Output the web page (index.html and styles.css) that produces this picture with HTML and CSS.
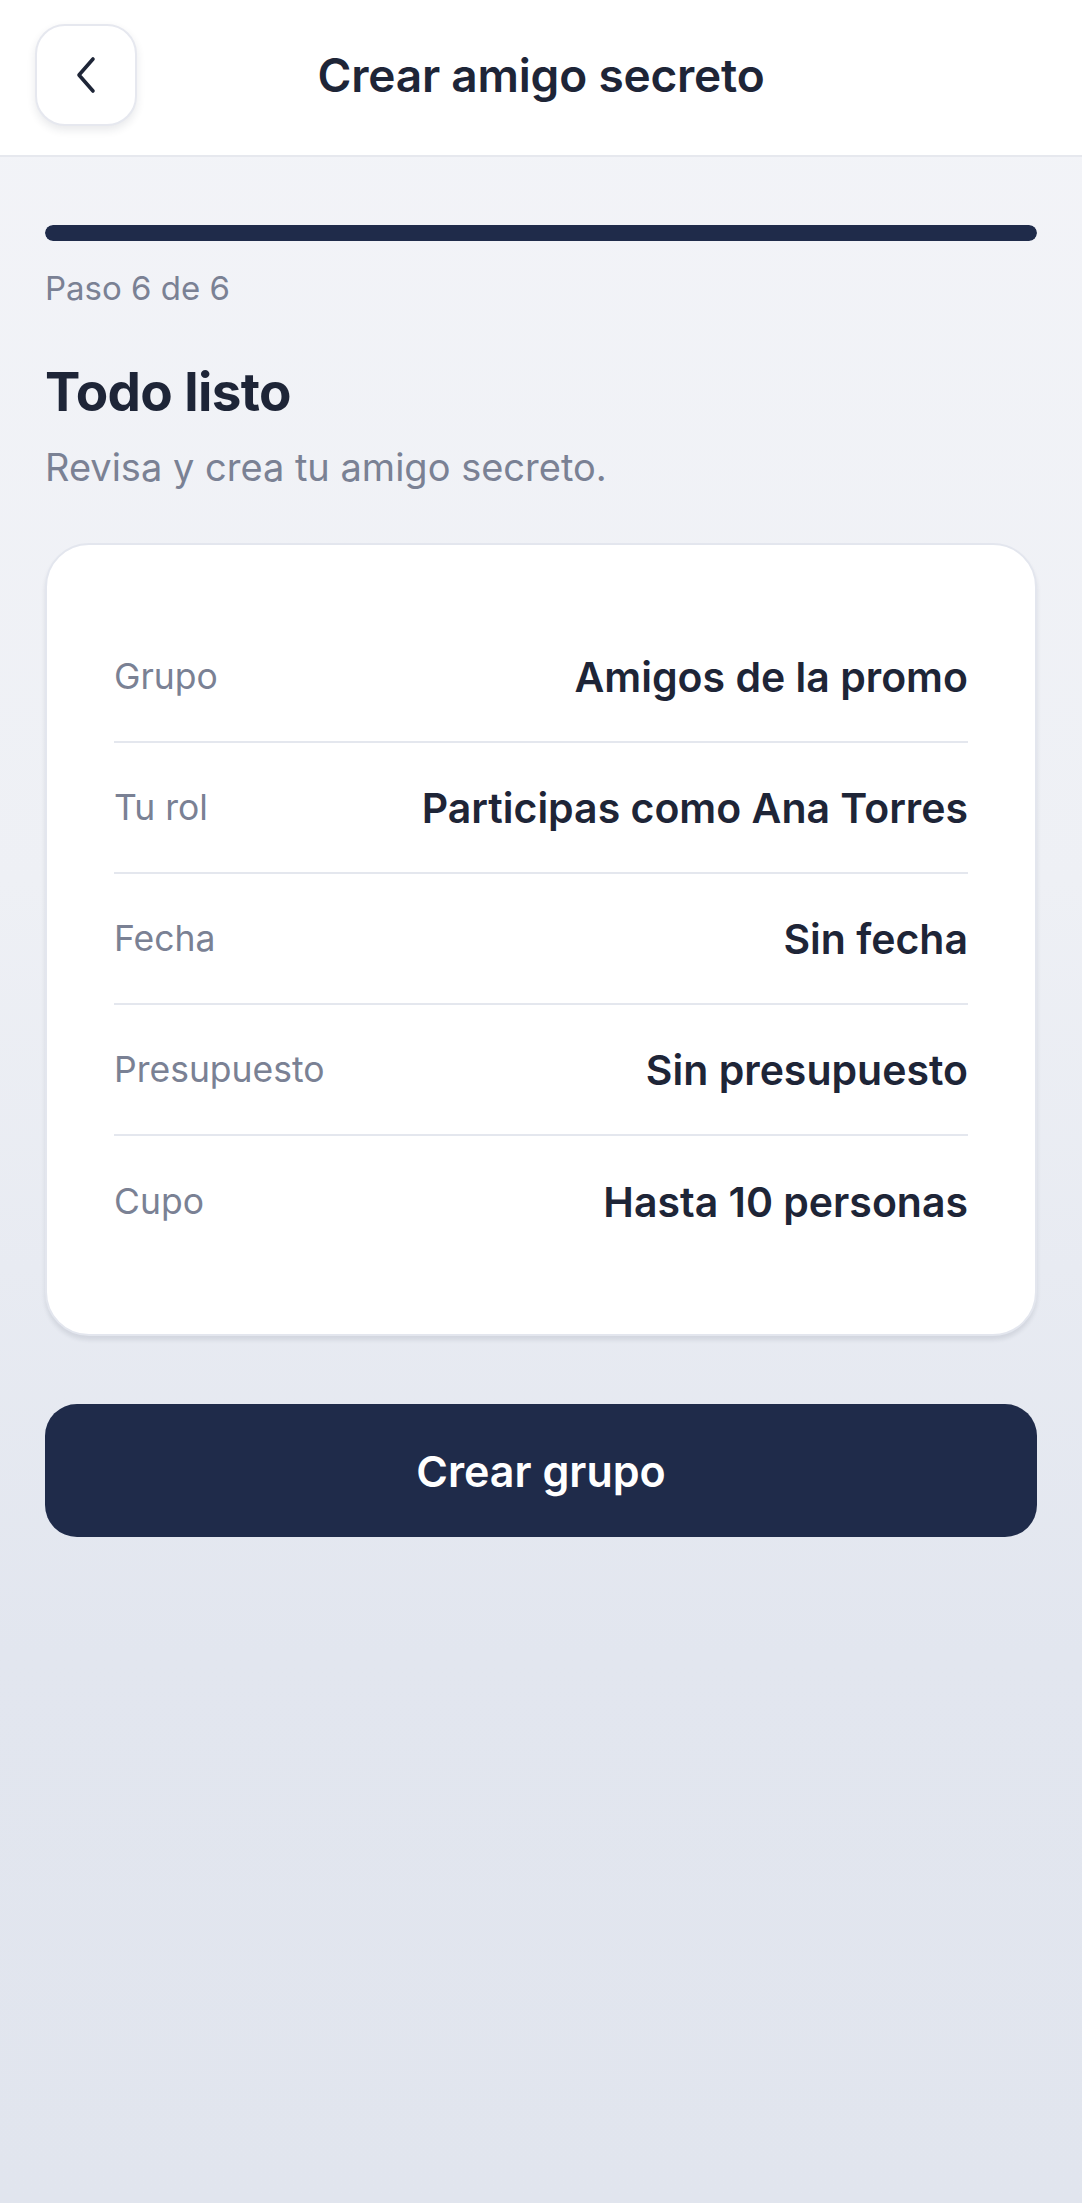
FILE: index.html
```html
<!DOCTYPE html>
<html lang="es">
<head>
    <meta charset="UTF-8">
    <meta name="viewport" content="width=device-width, initial-scale=1.0">
    <title>Crear amigo secreto</title>
    <link rel="stylesheet" href="styles.css">
</head>
<body>
    <header class="topbar">
        <button class="back-btn" type="button" aria-label="Volver">
            <svg width="24" height="38" viewBox="0 0 24 38">
                <path d="M19 3 L5 19 L19 35" fill="none" stroke="#1e2537" stroke-width="3.6" stroke-linecap="round" stroke-linejoin="round"/>
            </svg>
        </button>
        <h1 class="topbar-title">Crear amigo secreto</h1>
        <span class="spacer"></span>
    </header>

    <main class="content">
        <div class="progress"><div class="progress-fill"></div></div>
        <p class="step">Paso 6 de 6</p>

        <h2 class="heading">Todo listo</h2>
        <p class="subheading">Revisa y crea tu amigo secreto.</p>

        <section class="summary">
            <div class="row">
                <span class="label">Grupo</span>
                <span class="value">Amigos de la promo</span>
            </div>
            <div class="row">
                <span class="label">Tu rol</span>
                <span class="value">Participas como Ana Torres</span>
            </div>
            <div class="row">
                <span class="label">Fecha</span>
                <span class="value">Sin fecha</span>
            </div>
            <div class="row">
                <span class="label">Presupuesto</span>
                <span class="value">Sin presupuesto</span>
            </div>
            <div class="row">
                <span class="label">Cupo</span>
                <span class="value">Hasta 10 personas</span>
            </div>
        </section>

        <button class="btn" type="button">Crear grupo</button>
    </main>
</body>
</html>
```

FILE: styles.css
```css
* {
    box-sizing: border-box;
}
body {
    margin: 0;
    min-height: 2203px;
    font-family: Inter, "Noto Sans", sans-serif;
    color: #1e2537;
    background: linear-gradient(180deg, #f3f4f8 0%, #eef0f5 40%, #e2e6ef 75%, #e1e5ee 100%);
}
.topbar {
    height: 157px;
    background: #ffffff;
    border-bottom: 2px solid #e6e8ee;
    display: grid;
    grid-template-columns: 102px 1fr 102px;
    align-items: center;
    padding: 0 35px 6px;
}
.back-btn {
    width: 102px;
    height: 102px;
    border-radius: 30px;
    background: #ffffff;
    border: 2px solid #e6e8ef;
    box-shadow: 0 4px 8px rgba(30, 37, 55, 0.1);
    display: flex;
    align-items: center;
    justify-content: center;
    padding: 0;
    cursor: pointer;
}
.topbar-title {
    margin: 0;
    text-align: center;
    font-size: 46px;
    font-weight: 600;
    letter-spacing: -0.2px;
}
.content {
    padding: 68px 45px 0;
}
.progress {
    height: 16px;
    border-radius: 8px;
    background: #dfe3eb;
    overflow: hidden;
}
.progress-fill {
    width: 100%;
    height: 100%;
    background: #1f2b4a;
    border-radius: 8px;
}
.step {
    margin: 27px 0 0;
    font-size: 33px;
    color: #7a8194;
}
.heading {
    margin: 52px 0 0;
    font-size: 53px;
    font-weight: 700;
    letter-spacing: -0.6px;
}
.subheading {
    margin: 20px 0 0;
    font-size: 38px;
    color: #7a8194;
}
.summary {
    margin-top: 53px;
    background: #ffffff;
    border: 2px solid #e3e6ee;
    border-radius: 44px;
    box-shadow: 0 4px 4px rgba(30, 37, 55, 0.1);
    padding: 67px 67px;
}
.row {
    height: 131px;
    display: flex;
    justify-content: space-between;
    align-items: center;
    border-bottom: 2px solid #e4e7ee;
}
.row:last-child {
    border-bottom: none;
}
.label {
    font-size: 35.5px;
    color: #7a8194;
}
.value {
    font-size: 41px;
    font-weight: 600;
    color: #1e2537;
}
.btn {
    margin-top: 68px;
    width: 100%;
    height: 133px;
    border: none;
    border-radius: 32px;
    background: #1f2b4a;
    color: #ffffff;
    font-family: Inter, "Noto Sans", sans-serif;
    font-size: 43px;
    font-weight: 600;
    cursor: pointer;
}
```
